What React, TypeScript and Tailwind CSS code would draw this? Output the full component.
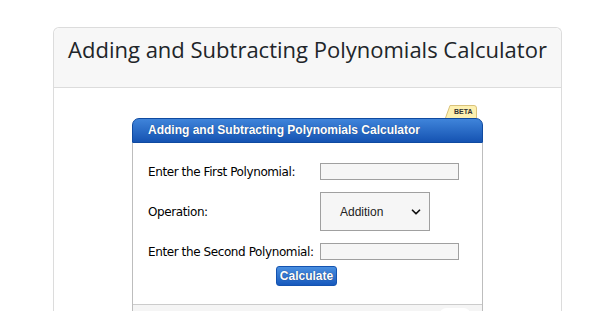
import { ChevronDown } from 'lucide-react';

const Row = ({ label, children, className }: { label: string; children: React.ReactNode; className?: string }) => (
  <div className={'flex items-center ' + (className ?? '')}>
    <div className="w-[172px] shrink-0 font-['DejaVu_Sans',sans-serif] text-[12px] leading-[16px] tracking-[-0.4px] text-black">{label}</div>
    {children}
  </div>
);

const App = () => {
  return (
    <main className="h-[311px] w-full overflow-hidden bg-white">
      <div className="ml-[53px] mt-[27px] w-[509px] rounded-t-[6px] border border-[#dcdcdc] border-b-0">
        {/* Page header */}
        <div className="h-[60px] rounded-t-[6px] border-b border-[#dcdcdc] bg-[#f7f7f7] pt-[6px] text-center">
          <h1 className="font-['Open_Sans',sans-serif] text-[22px] leading-[30px] text-[#212529]">
            Adding and Subtracting Polynomials Calculator
          </h1>
        </div>

        <div className="bg-white pt-[30px]">
          {/* Widget */}
          <div className="relative mx-auto w-[351px]">
            <div className="absolute right-[6px] top-[-13px] h-[13px] w-[32px]">
              <svg width="32" height="13" viewBox="0 0 32 13" className="absolute inset-0">
                <path d="M0.5 13 L5 0.5 H29 Q31.5 0.5 31.5 3 V13" fill="#fdf0b0" stroke="#d9c27a" strokeWidth="1" />
              </svg>
              <span className="relative block pl-[9px] pt-[1px] font-['Liberation_Sans',sans-serif] text-[7px] font-bold leading-[12px] text-[#333]">
                BETA
              </span>
            </div>

            <div className="h-[25px] rounded-t-[7px] border border-[#0f4aa0] bg-gradient-to-b from-[#3f84da] to-[#1553b2] pl-[15px] font-['Liberation_Sans',sans-serif] text-[12px] font-bold leading-[23px] text-white [text-shadow:0_0_1px_rgba(0,0,0,0.4)]">
              Adding and Subtracting Polynomials Calculator
            </div>

            <div className="border-x border-[#bdbdbd]">
              <div className="pl-[15px] pt-[20px]">
                <Row label="Enter the First Polynomial:">
                  <input className="h-[17px] w-[139px] border border-[#a0a0a0] bg-[#f6f6f6] outline-none" />
                </Row>
                <Row label="Operation:" className="mt-[12px]">
                  <div className="flex h-[39px] w-[110px] items-center justify-between border border-[#a0a0a0] bg-[#f6f6f6] pl-[19px] pr-[6px] font-['Liberation_Sans',sans-serif] text-[12px] text-[#222]">
                    <span>Addition</span>
                    <ChevronDown size={14} strokeWidth={3} color="#111" />
                  </div>
                </Row>
                <Row label="Enter the Second Polynomial:" className="mt-[12px]">
                  <input className="h-[17px] w-[139px] border border-[#a0a0a0] bg-[#f6f6f6] outline-none" />
                </Row>
              </div>
              <div className="flex justify-center pb-[18px] pt-[6px]">
                <button className="ml-[-2px] h-[20px] w-[61px] rounded-[3px] border border-[#1453b0] bg-gradient-to-b from-[#4a8fe0] to-[#1759bd] font-['Liberation_Sans',sans-serif] text-[12px] font-bold leading-[18px] text-white [text-shadow:0_0_1px_rgba(0,0,0,0.5)]">
                  Calculate
                </button>
              </div>
              <div className="relative h-[20px] border-t border-[#cccccc] bg-[#f5f5f5]">
                <div className="absolute left-[307px] top-[3px] h-[12px] w-[30px] rounded-[6px] bg-white" />
              </div>
            </div>
          </div>
        </div>
      </div>
    </main>
  );
};

export default App;
